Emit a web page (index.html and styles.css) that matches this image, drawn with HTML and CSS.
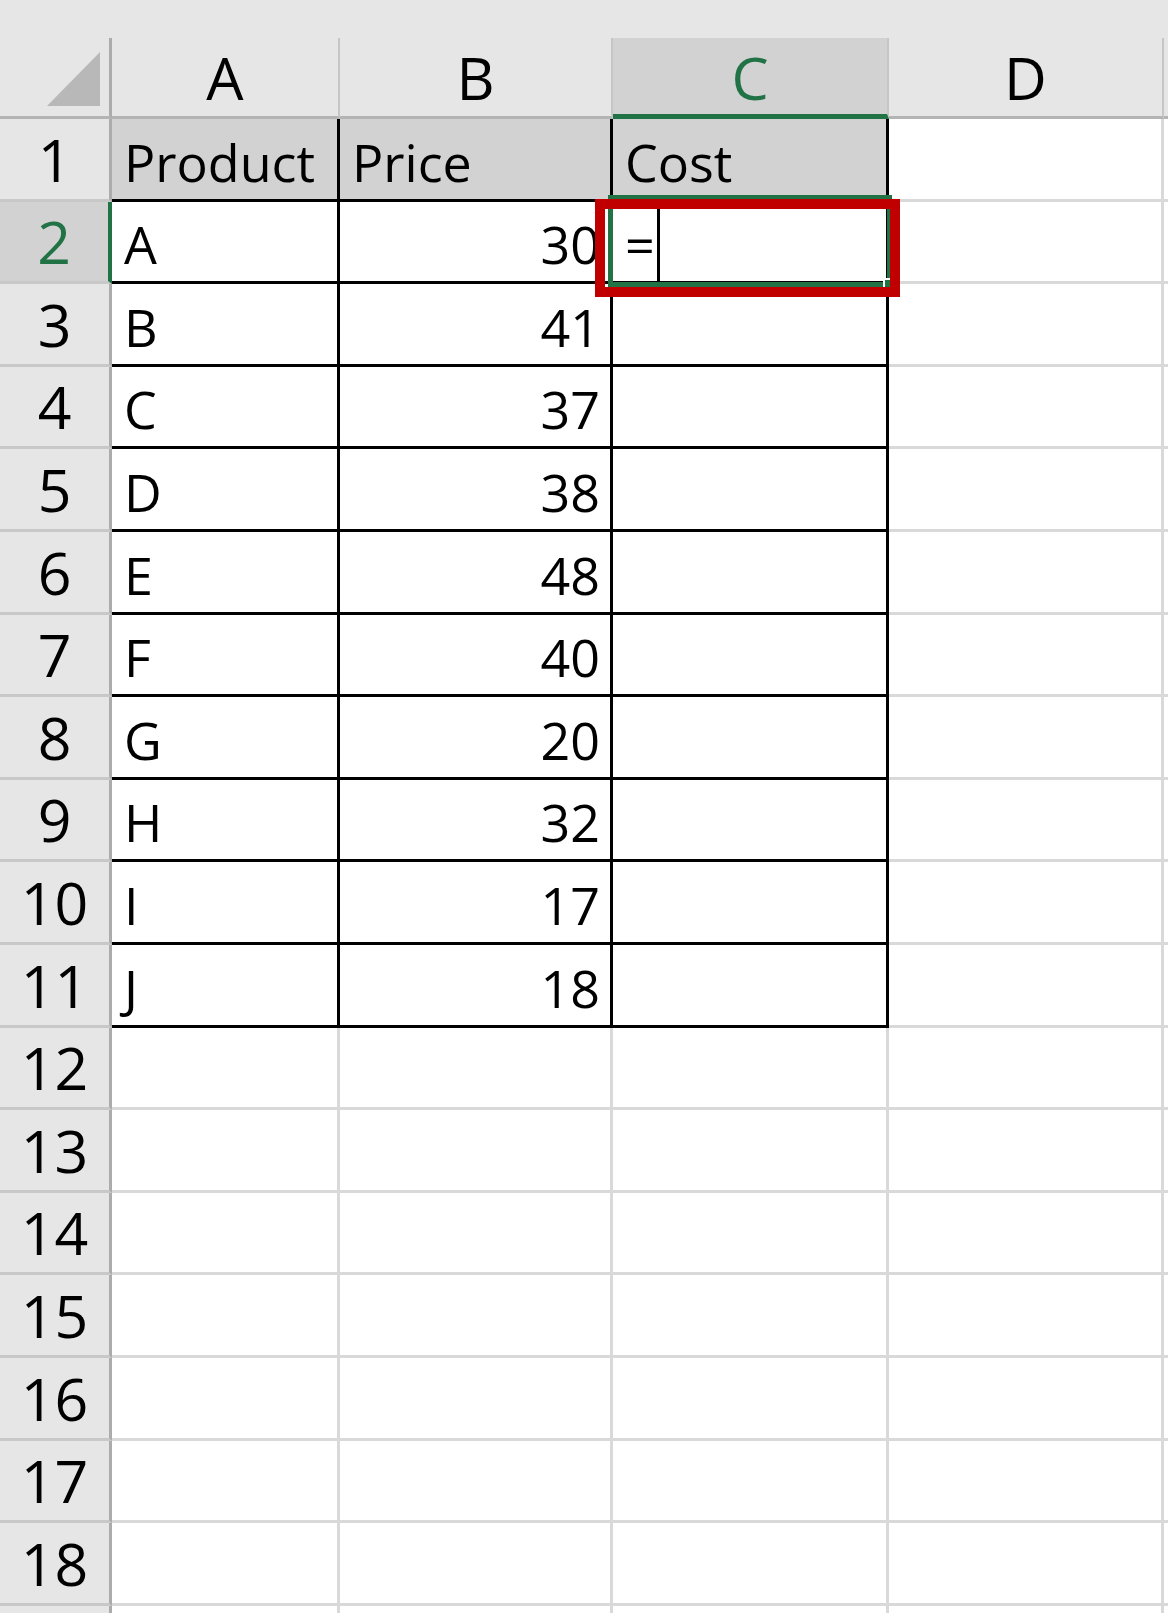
FILE: index.html
```html
<!DOCTYPE html>
<html lang="en">
<head>
    <meta charset="UTF-8">
    <meta name="viewport" content="width=device-width, initial-scale=1.0">
    <title>Cost formula</title>
    <link rel="stylesheet" href="styles.css">
</head>
<body>
    <div class="top-strip"></div>

    <div class="sheet">
        <!-- column headers -->
        <div class="cell corner">
            <svg class="select-all" width="53" height="54" viewBox="0 0 53 54"><polygon points="53,0 53,54 0,54" fill="#b8b8b8"/></svg>
        </div>
        <div class="cell col-head">A</div>
        <div class="cell col-head">B</div>
        <div class="cell col-head active">C</div>
        <div class="cell col-head">D</div>
        <div class="cell col-head"></div>

        <div class="cell row-head">1</div>
        <div class="cell tbl head-fill">Product</div>
        <div class="cell tbl head-fill">Price</div>
        <div class="cell tbl head-fill">Cost</div>
        <div class="cell"></div>
        <div class="cell"></div>

        <div class="cell row-head active">2</div>
        <div class="cell tbl">A</div>
        <div class="cell tbl num">30</div>
        <div class="cell tbl editing">=
            <span class="caret"></span>
            <span class="selection"><span class="handle"></span></span>
            <span class="callout"></span>
        </div>
        <div class="cell"></div>
        <div class="cell"></div>

        <div class="cell row-head">3</div>
        <div class="cell tbl">B</div>
        <div class="cell tbl num">41</div>
        <div class="cell tbl"></div>
        <div class="cell"></div>
        <div class="cell"></div>

        <div class="cell row-head">4</div>
        <div class="cell tbl">C</div>
        <div class="cell tbl num">37</div>
        <div class="cell tbl"></div>
        <div class="cell"></div>
        <div class="cell"></div>

        <div class="cell row-head">5</div>
        <div class="cell tbl">D</div>
        <div class="cell tbl num">38</div>
        <div class="cell tbl"></div>
        <div class="cell"></div>
        <div class="cell"></div>

        <div class="cell row-head">6</div>
        <div class="cell tbl">E</div>
        <div class="cell tbl num">48</div>
        <div class="cell tbl"></div>
        <div class="cell"></div>
        <div class="cell"></div>

        <div class="cell row-head">7</div>
        <div class="cell tbl">F</div>
        <div class="cell tbl num">40</div>
        <div class="cell tbl"></div>
        <div class="cell"></div>
        <div class="cell"></div>

        <div class="cell row-head">8</div>
        <div class="cell tbl">G</div>
        <div class="cell tbl num">20</div>
        <div class="cell tbl"></div>
        <div class="cell"></div>
        <div class="cell"></div>

        <div class="cell row-head">9</div>
        <div class="cell tbl">H</div>
        <div class="cell tbl num">32</div>
        <div class="cell tbl"></div>
        <div class="cell"></div>
        <div class="cell"></div>

        <div class="cell row-head">10</div>
        <div class="cell tbl">I</div>
        <div class="cell tbl num">17</div>
        <div class="cell tbl"></div>
        <div class="cell"></div>
        <div class="cell"></div>

        <div class="cell row-head">11</div>
        <div class="cell tbl">J</div>
        <div class="cell tbl num">18</div>
        <div class="cell tbl"></div>
        <div class="cell"></div>
        <div class="cell"></div>

        <div class="cell row-head">12</div>
        <div class="cell"></div><div class="cell"></div><div class="cell"></div><div class="cell"></div><div class="cell"></div>

        <div class="cell row-head">13</div>
        <div class="cell"></div><div class="cell"></div><div class="cell"></div><div class="cell"></div><div class="cell"></div>

        <div class="cell row-head">14</div>
        <div class="cell"></div><div class="cell"></div><div class="cell"></div><div class="cell"></div><div class="cell"></div>

        <div class="cell row-head">15</div>
        <div class="cell"></div><div class="cell"></div><div class="cell"></div><div class="cell"></div><div class="cell"></div>

        <div class="cell row-head">16</div>
        <div class="cell"></div><div class="cell"></div><div class="cell"></div><div class="cell"></div><div class="cell"></div>

        <div class="cell row-head">17</div>
        <div class="cell"></div><div class="cell"></div><div class="cell"></div><div class="cell"></div><div class="cell"></div>

        <div class="cell row-head">18</div>
        <div class="cell"></div><div class="cell"></div><div class="cell"></div><div class="cell"></div><div class="cell"></div>

        <!-- row 19 only peeks in at the bottom edge -->
        <div class="cell row-head"></div>
        <div class="cell"></div><div class="cell"></div><div class="cell"></div><div class="cell"></div><div class="cell"></div>
    </div>
</body>
</html>
```

FILE: styles.css
```css
body {
    margin: 0;
    background: #fff;
    font-family: "Open Sans", "Noto Sans", sans-serif;
    overflow: hidden;
}
.top-strip {
    height: 38px;
    background: #e6e6e6;
}
.sheet {
    display: grid;
    grid-template-columns: 112px 228px 273px 276px 275px 1fr;
    grid-template-rows: 81px;
    grid-auto-rows: 82.6px;
}
.cell {
    box-sizing: border-box;
    display: flex;
    align-items: flex-end;
    padding: 0 10px 11px 12px;
    border-right: 3px solid #d9d9d9;
    border-bottom: 3px solid #d9d9d9;
    font-size: 52px;
    line-height: 1;
    color: #000;
    white-space: nowrap;
}

/* headers */
.corner {
    justify-content: flex-end;
    padding: 0 9px 10px 0;
    background: #e6e6e6;
    border-right: 3px solid #acacac;
    border-bottom: 3px solid #b4b4b4;
}
.select-all {
    display: block;
}
.col-head {
    justify-content: center;
    padding: 0 0 9px 0;
    background: #e6e6e6;
    border-right: 2px solid #c6c6c6;
    border-bottom: 3px solid #b4b4b4;
    font-size: 59px;
}
.col-head.active {
    background: #d2d2d2;
    color: #217346;
    border-bottom: 5px solid #217346;
    padding-bottom: 7px;
}
.row-head {
    justify-content: center;
    padding: 0 0 10px 0;
    background: #e6e6e6;
    border-right: 3px solid #acacac;
    border-bottom: 3px solid #c8c8c8;
    font-size: 59px;
}
.row-head.active {
    background: #d2d2d2;
    color: #217346;
    border-right: 4px solid #217346;
}

/* the table A1:C11 */
.tbl {
    border-right-color: #000;
    border-bottom-color: #000;
}
.head-fill {
    background: #d2d2d2;
}
.num {
    justify-content: flex-end;
}

/* cell being edited */
.editing {
    position: relative;
}
.caret {
    position: absolute;
    left: 44px;
    top: 0;
    bottom: -3px;
    width: 3px;
    background: #000;
}
.selection {
    position: absolute;
    left: -5px;
    right: -6px;
    top: -7px;
    bottom: -6px;
    border: 5px solid #217346;
    z-index: 1;
}
.handle {
    position: absolute;
    right: -9px;
    bottom: -9px;
    width: 9px;
    height: 9px;
    background: #217346;
    border: 2px solid #fff;
}
.callout {
    position: absolute;
    left: -18px;
    right: -14px;
    top: -3px;
    bottom: -16px;
    border: 10px solid #c00000;
    z-index: 2;
}
```
